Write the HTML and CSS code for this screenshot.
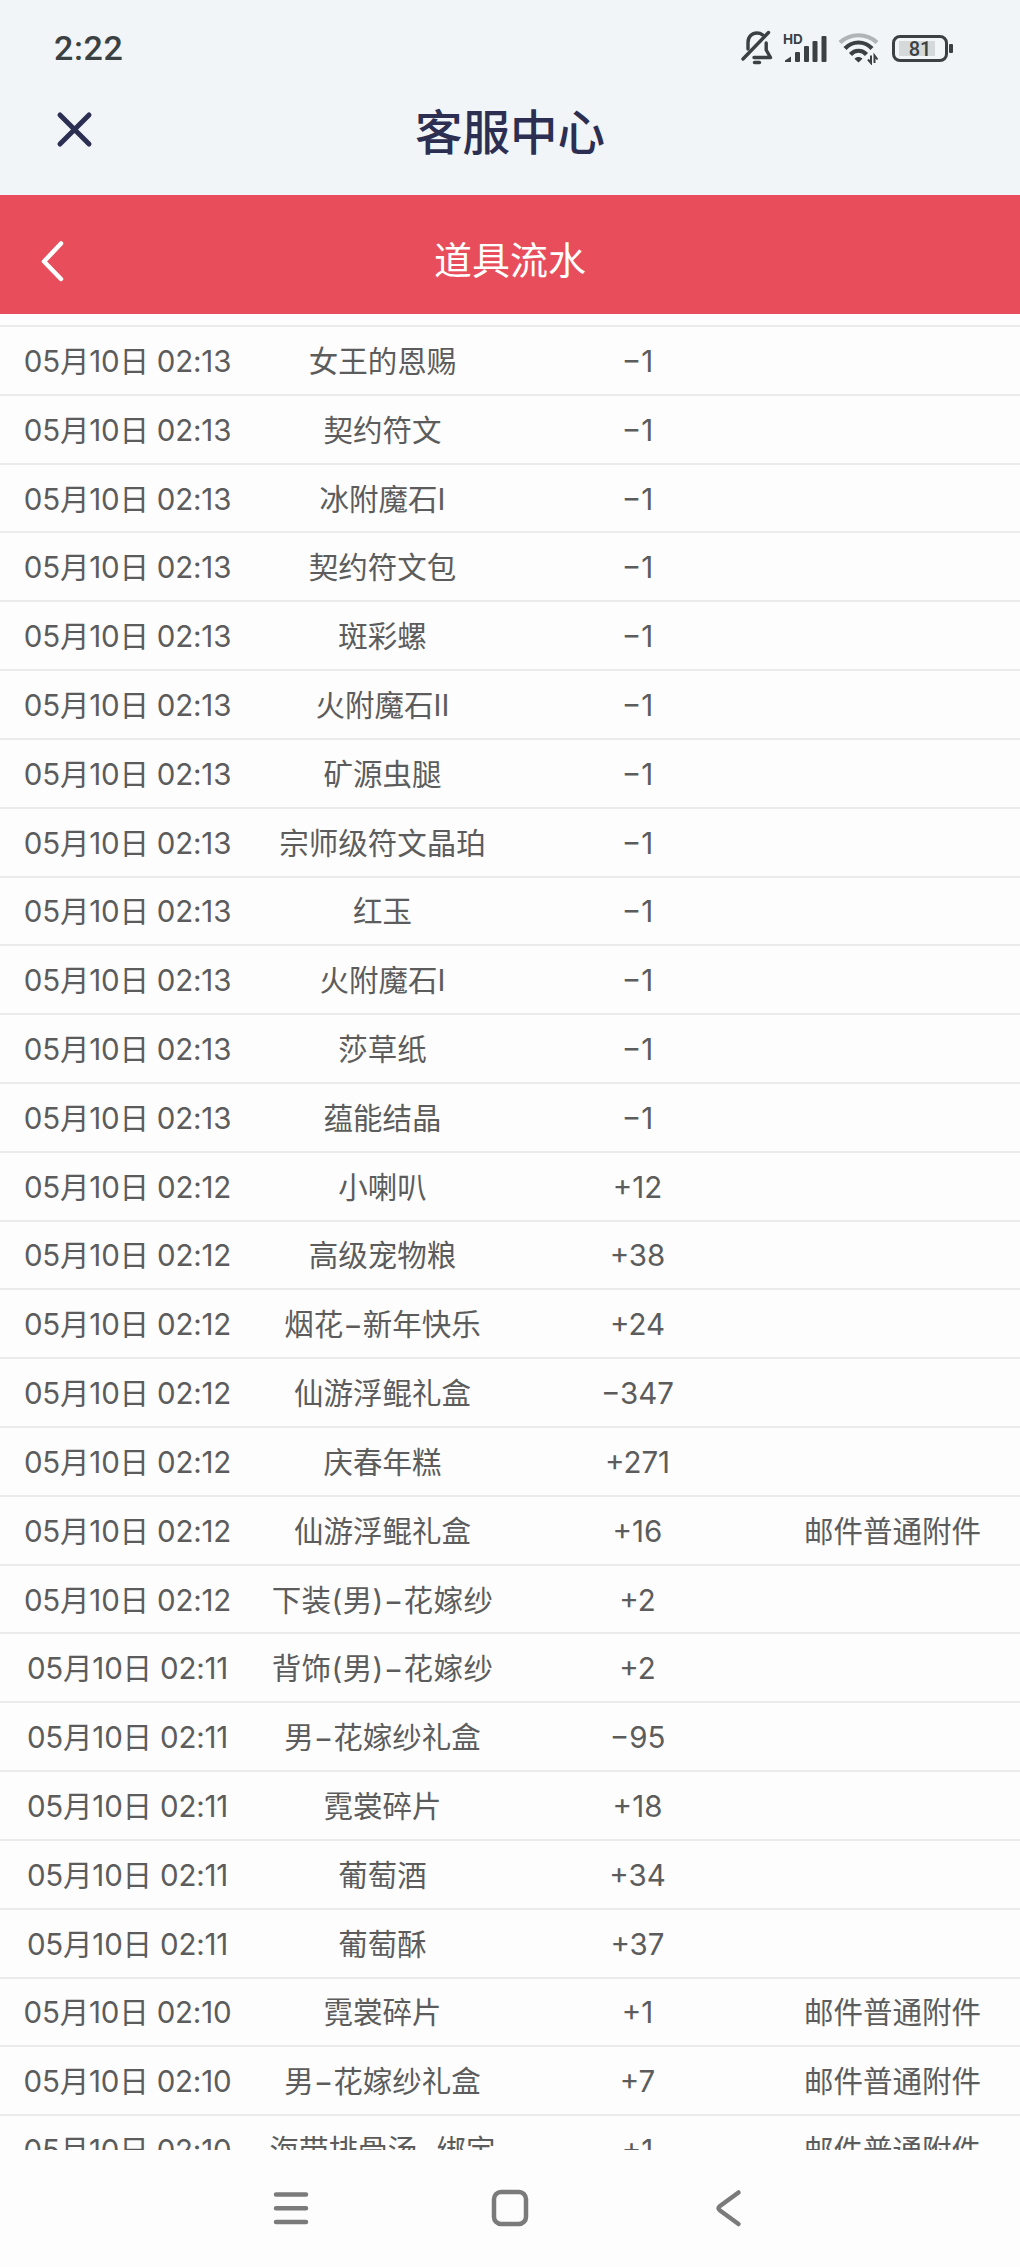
FILE: index.html
```html
<!DOCTYPE html>
<html lang="zh-CN">

<head>
    <meta charset="UTF-8" />
    <meta name="viewport" content="width=device-width, initial-scale=1.0" />
    <title>客服中心</title>
    <link rel="stylesheet" href="styles.css">
</head>

<body>
    <div class="screen">
        <header class="top">
            <div class="status-bar">
                <span class="clock">2:22</span>
                <div class="status-icons">
                    <svg class="bell" width="32" height="36" viewBox="0 0 32 36" fill="none" stroke="#3b4142" stroke-width="3.4" stroke-linecap="round" stroke-linejoin="round">
                        <path d="M7 19V12.500C7 6.500 11 3 16 3C18 3 20 3.600 21.500 4.800" />
                        <path d="M25.200 13V20L29.500 27.500H13" />
                        <path d="M2 29L27.500 2.500" />
                        <path d="M13.500 32.500H18.500" />
                    </svg>
                    <svg class="signal" width="45" height="32" viewBox="0 0 45 32" fill="#3b4142">
                        <text x="0" y="11.500" class="hd">HD</text>
                        <path d="M8 24.500V30H2V28.500Z" />
                        <rect x="12" y="20" width="5" height="10" rx="1" />
                        <rect x="21" y="14" width="5" height="16" rx="1" />
                        <rect x="29.500" y="9" width="5" height="21" rx="1" />
                        <rect x="38.500" y="4" width="5" height="26" rx="1" />
                    </svg>
                    <svg class="wifi" width="42" height="34" viewBox="0 0 42 34" fill="none" stroke="#3b4142" stroke-width="4.2">
                        <path d="M2 11.500C12.500 1.800 28.500 1.800 39 11.500" stroke="#b0b4b6" />
                        <path d="M7 17.500C14.500 9.500 26.500 9.500 34 17.500" />
                        <path d="M12.500 23.500C17 18.500 24 18.500 28.500 23.500" />
                        <path d="M20.500 31.500L16.500 27.800C18.500 25.300 22.500 25.300 24.500 27.800Z" fill="#3b4142" stroke="none" />
                        <path d="M33 24.500V32L30 28.500M36.500 32V24.500L39.500 28.500" stroke-width="2" />
                    </svg>
                    <div class="battery"><span>81</span></div>
                </div>
            </div>
            <div class="title-bar">
                <svg class="close" width="40" height="40" viewBox="0 0 40 40">
                    <path d="M5 5L34 34M34 5L5 34" />
                </svg>
                <h1>客服中心</h1>
            </div>
        </header>

        <div class="sub-bar">
            <svg class="back" width="30" height="46" viewBox="0 0 30 46">
                <path d="M23 6.500L6 24.500L23 42" />
            </svg>
            <h2>道具流水</h2>
        </div>

        <main class="list">
            <div class="row"><span class="date">05月10日 02:13</span><span>女王的恩赐</span><span>−1</span><span></span></div>
            <div class="row"><span class="date">05月10日 02:13</span><span>契约符文</span><span>−1</span><span></span></div>
            <div class="row"><span class="date">05月10日 02:13</span><span>冰附魔石I</span><span>−1</span><span></span></div>
            <div class="row"><span class="date">05月10日 02:13</span><span>契约符文包</span><span>−1</span><span></span></div>
            <div class="row"><span class="date">05月10日 02:13</span><span>斑彩螺</span><span>−1</span><span></span></div>
            <div class="row"><span class="date">05月10日 02:13</span><span>火附魔石II</span><span>−1</span><span></span></div>
            <div class="row"><span class="date">05月10日 02:13</span><span>矿源虫腿</span><span>−1</span><span></span></div>
            <div class="row"><span class="date">05月10日 02:13</span><span>宗师级符文晶珀</span><span>−1</span><span></span></div>
            <div class="row"><span class="date">05月10日 02:13</span><span>红玉</span><span>−1</span><span></span></div>
            <div class="row"><span class="date">05月10日 02:13</span><span>火附魔石I</span><span>−1</span><span></span></div>
            <div class="row"><span class="date">05月10日 02:13</span><span>莎草纸</span><span>−1</span><span></span></div>
            <div class="row"><span class="date">05月10日 02:13</span><span>蕴能结晶</span><span>−1</span><span></span></div>
            <div class="row"><span class="date">05月10日 02:12</span><span>小喇叭</span><span>+12</span><span></span></div>
            <div class="row"><span class="date">05月10日 02:12</span><span>高级宠物粮</span><span>+38</span><span></span></div>
            <div class="row"><span class="date">05月10日 02:12</span><span>烟花−新年快乐</span><span>+24</span><span></span></div>
            <div class="row"><span class="date">05月10日 02:12</span><span>仙游浮鲲礼盒</span><span>−347</span><span></span></div>
            <div class="row"><span class="date">05月10日 02:12</span><span>庆春年糕</span><span>+271</span><span></span></div>
            <div class="row"><span class="date">05月10日 02:12</span><span>仙游浮鲲礼盒</span><span>+16</span><span>邮件普通附件</span></div>
            <div class="row"><span class="date">05月10日 02:12</span><span class="wide">下装(男)−花嫁纱</span><span>+2</span><span></span></div>
            <div class="row"><span class="date">05月10日 02:11</span><span class="wide">背饰(男)−花嫁纱</span><span>+2</span><span></span></div>
            <div class="row"><span class="date">05月10日 02:11</span><span>男−花嫁纱礼盒</span><span>−95</span><span></span></div>
            <div class="row"><span class="date">05月10日 02:11</span><span>霓裳碎片</span><span>+18</span><span></span></div>
            <div class="row"><span class="date">05月10日 02:11</span><span>葡萄酒</span><span>+34</span><span></span></div>
            <div class="row"><span class="date">05月10日 02:11</span><span>葡萄酥</span><span>+37</span><span></span></div>
            <div class="row"><span class="date">05月10日 02:10</span><span>霓裳碎片</span><span>+1</span><span>邮件普通附件</span></div>
            <div class="row"><span class="date">05月10日 02:10</span><span>男−花嫁纱礼盒</span><span>+7</span><span>邮件普通附件</span></div>
            <div class="row"><span class="date">05月10日 02:10</span><span>海带排骨汤−绑定</span><span>+1</span><span>邮件普通附件</span></div>
        </main>

        <nav class="nav-bar">
            <svg width="44" height="44" viewBox="0 0 44 44">
                <path d="M7 8.500H37M7 22.200H37M7 36H37" />
            </svg>
            <svg width="44" height="44" viewBox="0 0 44 44">
                <rect x="6" y="6" width="32" height="32" rx="7" />
            </svg>
            <svg width="44" height="44" viewBox="0 0 44 44">
                <path d="M31.500 6.500L13 20Q10 22.300 13 24.500L31.500 38" />
            </svg>
        </nav>
    </div>
</body>

</html>
```

FILE: styles.css
```css
:root {
    --top-bg: #f1f5f8;
    --red: #e74d5b;
    --dark: #2c2f52;
    --status: #3b4142;
    --text: #5c5c5c;
    --line: #ebebeb;
}

* {
    box-sizing: border-box;
}

body {
    margin: 0;
    font-family: Inter, "Noto Sans CJK SC", sans-serif;
    background: #fdfdfd;
    color: var(--text);
}

.screen {
    display: flex;
    flex-direction: column;
    height: 2267px;
    overflow: hidden;
}

.top {
    flex: none;
    height: 195px;
    background: var(--top-bg);
}

.status-bar {
    display: flex;
    justify-content: space-between;
    align-items: center;
    height: 96px;
    padding: 0 66px 0 54px;
}

.clock {
    font-family: Roboto, sans-serif;
    font-size: 34px;
    font-weight: 500;
    letter-spacing: 0.6px;
    color: var(--status);
}

.status-icons {
    display: flex;
    align-items: center;
}

.signal {
    margin-left: 10px;
}

.wifi {
    margin-left: 10px;
}

.hd {
    font: 700 13.500px Inter, sans-serif;
}

.battery {
    position: relative;
    width: 56px;
    height: 27px;
    margin: 0 6px 0 12px;
    border: 3px solid var(--status);
    border-radius: 8px;
    background: linear-gradient(90deg, #d6d9da 85%, #f3f6f8 85%) 4px 3px / 42px 15px no-repeat;
    font-family: Roboto, sans-serif;
    font-size: 20px;
    font-weight: 500;
    line-height: 22px;
    text-align: center;
    color: var(--status);
}

.battery::after {
    content: "";
    position: absolute;
    right: -8px;
    top: 6px;
    width: 4px;
    height: 9px;
    border-radius: 1px;
    background: var(--status);
}

.title-bar,
.sub-bar {
    display: grid;
    grid-template-columns: 120px 1fr 120px;
    align-items: center;
}

.title-bar {
    height: 67px;
}

.close {
    margin-left: 55px;
    fill: none;
    stroke: var(--dark);
    stroke-width: 5;
    stroke-linecap: round;
}

h1,
h2 {
    margin: 0;
    font-family: "Noto Sans CJK SC", sans-serif;
    line-height: 1;
    text-align: center;
}

h1 {
    font-size: 47.500px;
    font-weight: 500;
    color: var(--dark);
}

.sub-bar {
    flex: none;
    height: 119px;
    padding-top: 10px;
    background: var(--red);
}

.back {
    margin-left: 38px;
    fill: none;
    stroke: #fff;
    stroke-width: 4.500;
    stroke-linecap: round;
    stroke-linejoin: round;
}

h2 {
    margin-top: -4px;
    font-size: 38px;
    font-weight: 400;
    color: #fff;
}

.list {
    flex: 1;
    min-height: 0;
    padding-top: 11px;
    overflow: hidden;
}

.row {
    display: grid;
    grid-template-columns: repeat(4, 1fr);
    align-items: center;
    height: 68.820px;
    padding-top: 1px;
    border-top: 2px solid var(--line);
    font-size: 29.500px;
    line-height: 40px;
    text-align: center;
    white-space: nowrap;
}

.date {
    letter-spacing: -0.2px;
}

.wide {
    letter-spacing: 0.4px;
}

.nav-bar {
    display: flex;
    flex: none;
    justify-content: center;
    gap: 175px;
    height: 117px;
    padding: 36px 1px 0 0;
}

.nav-bar svg {
    fill: none;
    stroke: #7b7b7b;
    stroke-width: 4.500;
    stroke-linecap: round;
    stroke-linejoin: round;
}
```
